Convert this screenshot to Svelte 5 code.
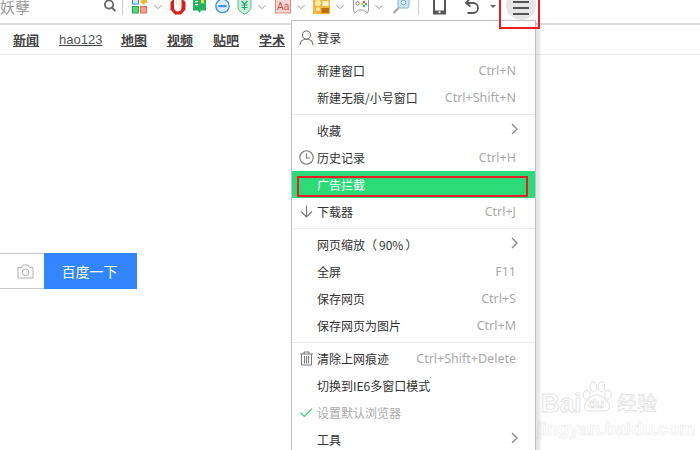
<script>
  const nav = ['新闻', 'hao123', '地图', '视频', '贴吧', '学术'];
  const groups = [
    [{ t: '登录', i: 'user' }],
    [{ t: '新建窗口', k: 'Ctrl+N' }, { t: '新建无痕/小号窗口', k: 'Ctrl+Shift+N' }],
    [{ t: '收藏', sub: true }, { t: '历史记录', k: 'Ctrl+H', i: 'clock' }, { t: '广告拦截', on: true }, { t: '下载器', k: 'Ctrl+J', i: 'down' }],
    [{ t: '网页缩放（', p: '90%', e: '）', sub: true }, { t: '全屏', k: 'F11' }, { t: '保存网页', k: 'Ctrl+S' }, { t: '保存网页为图片', k: 'Ctrl+M' }],
    [{ t: '清除上网痕迹', k: 'Ctrl+Shift+Delete', i: 'trash' }, { t: '切换到IE6多窗口模式' }, { t: '设置默认浏览器', i: 'check', dim: true }, { t: '工具', sub: true }]
  ];
</script>

{#snippet chev(cls)}
  <svg class="chev {cls}" width="8" height="14" viewBox="0 0 8 14"><path d="M.5 5.200L4 8.700l3.500-3.500" fill="none" stroke="#999" stroke-width="1"/></svg>
{/snippet}

<div class="page">
  <header class="toolbar">
    <span class="query">妖孽</span>
    <svg class="search" width="14" height="14" viewBox="0 0 14 14"><circle cx="6" cy="4.500" r="4.200" fill="none" stroke="#666" stroke-width="1.700"/><path d="M9 7.500l3.400 3.600" stroke="#666" stroke-width="2"/></svg>
    <i class="sep first"></i>
    <svg class="ic a1" width="16" height="14" viewBox="0 0 16 14"><rect x=".5" y="-3" width="6" height="7" fill="#cfe6fb" stroke="#2c8ff0"/><rect x=".5" y="6.500" width="6" height="6.500" fill="#5ad17d" stroke="#1fae4c"/><rect x="8.500" y="6.500" width="6" height="6.500" fill="#fb9d8d" stroke="#ea6b55"/><path d="M11.500 -2v6.500M8.500 1.500h6.500" stroke="#f5b21c" stroke-width="2.400"/></svg>
    {@render chev('c1')}
    <svg class="ic a2" width="16" height="15" viewBox="0 0 16 15"><path d="M5 -2h6l4.500 4v7.500L11 14.500H5L.5 9.500V2z" fill="#d8211c"/><path d="M4 5V0h7.500v7.500c0 2.500-1.500 4-3.800 4S4 9.500 4 7z" fill="#fff"/><path d="M6.500 0v5M9 0v5" stroke="#eda" stroke-width=".6"/></svg>
    <svg class="ic a3" width="15" height="15" viewBox="0 0 15 15"><path d="M1 -2h13v12.500H9L7.500 13 6 10.500H1z" fill="#22b35e"/><rect x="3" y="1" width="3" height="1.200" fill="#fff"/><rect x="3" y="4" width="3" height="1.200" fill="#fff"/><path d="M9 -2h3v6L10.500 3 9 4z" fill="#f6d24a"/></svg>
    <svg class="ic a4" width="15" height="14" viewBox="0 0 15 14"><circle cx="7.500" cy="6" r="6.700" fill="#dcecff" stroke="#3d94f5" stroke-width="1.300"/><rect x="3.500" y="5" width="8" height="2.200" fill="#3d94f5"/></svg>
    <svg class="ic a5" width="15" height="15" viewBox="0 0 15 15"><path d="M1 -2h13v9c0 3-3 5.500-6.500 7C4 12.500 1 10 1 7z" fill="#cdeede" stroke="#4fc08d"/><path d="M4.500 1l3 3 3-3M7.500 4v6M4.500 5h6M4.500 7.500h6" fill="none" stroke="#1fa868" stroke-width="1.200"/></svg>
    {@render chev('c2')}
    <svg class="ic a6" width="16" height="14" viewBox="0 0 16 14"><rect x=".5" y="-3" width="15" height="16" fill="#f8d6d2" stroke="#d98a82"/><text x="2" y="10" font-size="10" fill="#c9544a" font-family="Liberation Sans">Aa</text></svg>
    {@render chev('c3')}
    <svg class="ic a7" width="17" height="15" viewBox="0 0 17 15"><rect x="0" y="-3" width="17" height="17" fill="#f4b73c"/><circle cx="5" cy="3" r="3" fill="#fdeaa8"/><circle cx="5" cy="9" r="2" fill="#fdeaa8"/><rect x="9.500" y="1" width="6" height="5" fill="#fff3c9"/><rect x="8.500" y="8" width="7.500" height="5" fill="#b86f12"/></svg>
    {@render chev('c4')}
    <svg class="ic a8" width="17" height="14" viewBox="0 0 17 14"><path d="M.5 -2h15v12l-1 3-4-3h-5l-4 3-1-3z" fill="#fff" stroke="#999"/><circle cx="4.500" cy="3.500" r="1.700" fill="none" stroke="#777"/><circle cx="11" cy="2" r="1.200" fill="#e44"/><circle cx="13" cy="4" r="1.200" fill="#3b7"/><circle cx="9" cy="4" r="1.200" fill="#f5b21c"/><circle cx="11" cy="6" r="1.200" fill="#39e"/></svg>
    {@render chev('c5')}
    <svg class="ic a9" width="17" height="15" viewBox="0 0 17 15"><rect x="6" y="-3" width="11" height="11" rx="2" fill="#cfe5f6" stroke="#7fb5dc"/><circle cx="11.500" cy="2.500" r="2.300" fill="#fff" stroke="#6aa6d4"/><path d="M6.500 8L1.500 13" stroke="#aaa" stroke-width="2.400"/></svg>
    <i class="sep second"></i>
    <svg class="ic a10" width="13" height="15" viewBox="0 0 13 15"><path d="M1 -3h11v16.500H1z" fill="none" stroke="#555" stroke-width="2"/><rect x="1" y="10.500" width="11" height="3.500" fill="#555"/><rect x="5.500" y="11.300" width="2" height="1.800" fill="#fff"/></svg>
    <svg class="ic a11" width="15" height="15" viewBox="0 0 15 15"><path d="M4.500 -1L1 3l4.500 3.500M1.500 3H8a5 5 0 0 1 0 10H2.500" fill="none" stroke="#555" stroke-width="1.800"/></svg>
    <svg class="ic a12" width="6" height="4" viewBox="0 0 6 4"><path d="M0 0h6L3 3z" fill="#666"/></svg>
  </header>

  <nav class="links">
    {#each nav as n}
      <span class:latin={n === 'hao123'}>{n}</span>
    {/each}
  </nav>

  <form class="searchbar">
    <div class="input">
      <svg width="17" height="15" viewBox="0 0 17 15"><path d="M1 3.500h3.500L6 1h5l1.500 2.500H16V14H1z" fill="none" stroke="#b0b0b0"/><circle cx="8.500" cy="8.300" r="3.300" fill="none" stroke="#b0b0b0"/></svg>
    </div>
    <div class="submit">百度一下</div>
  </form>

  <div class="round">
    <i></i><i></i><i></i>
  </div>
  <div class="mark top"></div>

  <div class="menu">
    {#each groups as g, gi}
      <div class="group" class:nofirst={gi > 0}>
        {#each g as r}
          <div class="row" class:on={r.on} class:dim={r.dim}>
            <span class="glyph">
              {#if r.i === 'user'}
                <svg width="15" height="16" viewBox="0 0 15 16"><circle cx="7.500" cy="5" r="4" fill="none" stroke="#777" stroke-width="1.100"/><path d="M1 15c.3-3.500 2.800-5.800 6.500-5.800S13.700 11.500 14 15" fill="none" stroke="#777" stroke-width="1.100"/></svg>
              {:else if r.i === 'clock'}
                <svg width="15" height="15" viewBox="0 0 15 15"><circle cx="7.500" cy="7.500" r="6.700" fill="none" stroke="#777" stroke-width="1.100"/><path d="M7.500 3.500v4.500H11" fill="none" stroke="#777" stroke-width="1.100"/></svg>
              {:else if r.i === 'down'}
                <svg width="15" height="15" viewBox="0 0 15 15"><path d="M7.500 1.500v11.500M2 7.500l5.500 5.500L13 7.500" fill="none" stroke="#777" stroke-width="1.100"/></svg>
              {:else if r.i === 'trash'}
                <svg width="15" height="15" viewBox="0 0 15 15"><path d="M1 3h13M5 3V1h5v2M2.500 3v11h10V3M5.500 5v7.500M7.500 5v7.500M9.500 5v7.500" fill="none" stroke="#777"/></svg>
              {:else if r.i === 'check'}
                <svg width="15" height="15" viewBox="0 0 15 15"><path d="M1.500 7.500l3.800 3.800L13 3.800" fill="none" stroke="#3fd07c" stroke-width="1.200"/></svg>
              {/if}
            </span>
            <span class="label">{r.t}{#if r.p}<span class="pct">{r.p}</span>{r.e}{/if}</span>
            {#if r.k}<span class="key">{r.k}</span>{/if}
            {#if r.sub}
              <svg class="arrow" width="7" height="12" viewBox="0 0 7 12"><path d="M1 1l5 5-5 5" fill="none" stroke="#888" stroke-width="1.300"/></svg>
            {/if}
          </div>
        {/each}
      </div>
    {/each}
  </div>
  <div class="mark inner"></div>

  <div class="wm">
    <div class="wm-top">
      <span class="bai">Bai</span>
      <span class="paw">
        <svg width="34" height="34" viewBox="0 0 46 46"><g fill="#fff" stroke="#e4e4e4" stroke-width="1.500"><ellipse cx="9" cy="20" rx="4.500" ry="6"/><ellipse cx="18" cy="9" rx="4.500" ry="6.500"/><ellipse cx="29" cy="9" rx="4.500" ry="6.500"/><ellipse cx="38" cy="20" rx="4.500" ry="6"/><path d="M23 20c7 0 17 10 17 16 0 7-8 6-17 6s-17 1-17-6c0-6 10-16 17-16z"/></g></svg>
        <b>du</b>
      </span>
      <span class="cn">经验</span>
    </div>
    <div class="url">jingyan.baidu.com</div>
  </div>
</div>

<style>
  :global(body) { margin: 0; background: #fff; }
  .page {
    position: relative;
    width: 700px;
    height: 450px;
    overflow: hidden;
    background: #fff;
    font-family: "Noto Sans CJK SC", "Noto Sans", sans-serif;
    color: #333;
  }
  .toolbar {
    display: flex;
    align-items: flex-start;
    height: 23px;
    border-bottom: 2px solid #dedede;
    box-sizing: content-box;
    background: #fff;
  }
  .query { width: 103px; font-size: 15px; line-height: 13px; color: #999; height: 13px; }
  .sep { width: 1px; height: 15px; background: #ccc; display: block; flex: none; }
  .sep.first { margin-left: 5px; margin-right: 9px; }
  .sep.second { margin-left: 9px; margin-right: 14px; }
  .toolbar svg { display: block; overflow: visible; flex: none; }
  .chev { margin-left: 6px; margin-right: 8px; }
  .c4 { margin-left: 6px; margin-right: 9px; }
  .c5 { margin-left: 5px; margin-right: 9px; }
  .a3 { margin-left: 6px; }
  .a4 { margin-left: 8px; }
  .a5 { margin-left: 7px; }
  .a6 { margin-left: 1px; }
  .a10 { margin-right: 19px; }
  .a11 { margin-right: 10px; }
  .a12 { margin-top: 5px; }

  .links {
    display: flex;
    gap: 20px;
    height: 29px;
    padding-left: 13px;
    border-bottom: 1px solid #ececec;
    align-items: center;
    font-size: 13px;
    font-weight: 700;
    color: #444;
    text-decoration: underline;
  }
  .links span { text-underline-offset: 2px; line-height: 18px; }
  .links .latin { font-family: "Liberation Sans", sans-serif; font-weight: 400; font-size: 13px; width: 42px; color: #555; }

  .searchbar { display: flex; margin-top: 198px; height: 36px; }
  .input {
    width: 44px;
    box-sizing: border-box;
    border-top: 1px solid #c4c7ce;
    border-bottom: 1px solid #c4c7ce;
    display: flex;
    align-items: center;
    padding-left: 17px;
  }
  .input svg { display: block; }
  .submit {
    width: 93px;
    background: #3385ff;
    color: #fff;
    font-size: 14px;
    line-height: 36px;
    text-align: center;
    text-indent: -2px;
  }

  .round {
    position: absolute;
    left: 506px;
    top: -10px;
    width: 30px;
    height: 30px;
    border-radius: 50%;
    background: #e6e6e6;
    display: flex;
    flex-direction: column;
    align-items: center;
    gap: 4px;
    padding-top: 11px;
    box-sizing: border-box;
  }
  .round i { width: 16px; height: 2px; background: #555; display: block; }

  .mark { position: absolute; border: 2px solid #ed1c24; box-sizing: border-box; z-index: 3; }
  .mark.top { left: 499px; top: -4px; width: 41px; height: 33px; }
  .mark.inner { left: 297px; top: 176px; width: 231px; height: 21px; }

  .menu {
    position: absolute;
    left: 291px;
    top: 20px;
    width: 245px;
    height: 440px;
    box-sizing: border-box;
    background: #fff;
    border: 1px solid #c2c2c2;
    box-shadow: 5px 0 3px -1px rgba(0, 0, 0, .1);
    padding-top: 3px;
    z-index: 2;
  }
  .group { padding-bottom: 3px; }
  .group.nofirst { border-top: 1px solid #ececec; padding-top: 2px; }
  .row {
    display: flex;
    align-items: center;
    height: 27px;
    font-size: 12px;
    color: #333;
    padding-left: 7px;
    padding-right: 18px;
    box-sizing: border-box;
  }
  .glyph { width: 18px; flex: none; display: flex; }
  .glyph svg { display: block; }
  .label { flex: 1; }
  .pct { padding: 0 2px; }
  .key { color: #aaa; font-family: "Noto Sans", sans-serif; font-size: 12.500px; margin-right: 1px; }
  .row.on { background: #2bdb78; color: #fff; }
  .row.dim { color: #aaa; }
  .arrow { margin-right: -1px; margin-top: -3px; }

  .wm { position: absolute; left: 541px; top: 378px; color: #fff; }
  .wm-top { display: flex; align-items: flex-end; height: 38px; }
  .bai {
    font-family: "Liberation Sans", sans-serif;
    font-size: 26px;
    line-height: 26px;
    font-weight: 700;
    width: 39px;
    color: #fff;
    -webkit-text-stroke: 1px #e6e6e6;
  }
  .paw { position: relative; width: 34px; height: 36px; display: block; }
  .paw svg { position: absolute; left: 0; top: 0; }
  .paw b {
    position: absolute;
    left: 8px;
    top: 17px;
    font: 700 13px/14px "Liberation Sans", sans-serif;
    color: #fff;
    -webkit-text-stroke: .7px #e0e0e0;
  }
  .cn {
    font-size: 20px;
    line-height: 26px;
    color: #fff;
    margin-left: 3px;
    -webkit-text-stroke: .7px #e2e2e2;
  }
  .url {
    font: 700 18px/20px "Liberation Sans", sans-serif;
    color: #fff;
    -webkit-text-stroke: .6px #ececec;
    margin-top: 3px;
    margin-left: -4px;
  }
</style>
